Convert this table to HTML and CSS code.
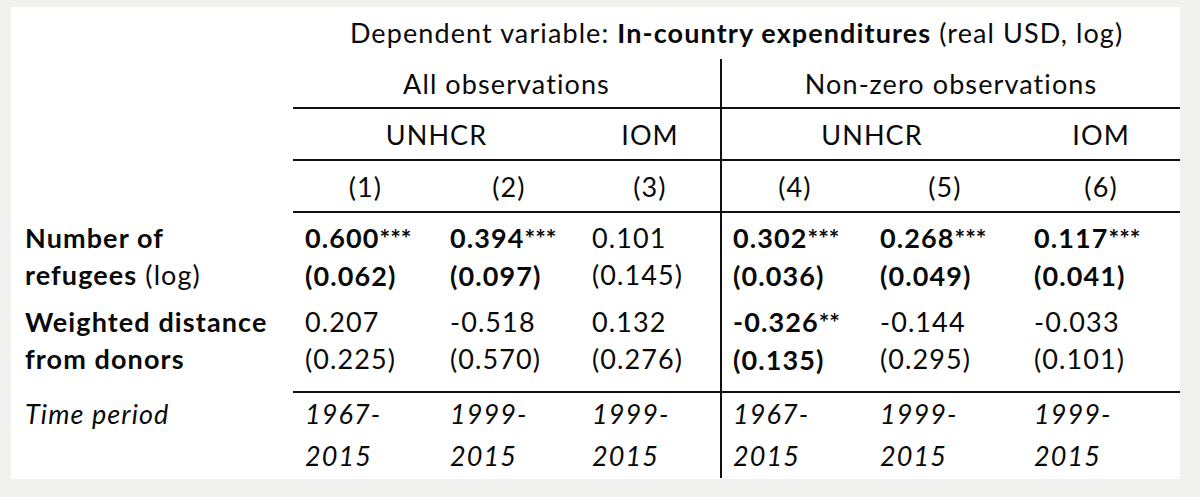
FILE: index.html
```html
<!DOCTYPE html>
<html lang="en">
<head>
<meta charset="utf-8">
<title>In-country expenditures regression table</title>
<link rel="stylesheet" href="styles.css">
</head>
<body>
<div class="sheet">
  <table class="results">
    <colgroup>
      <col class="w-label">
      <col class="w-c1">
      <col class="w-c2">
      <col class="w-c3">
      <col class="w-c4">
      <col class="w-c5">
      <col class="w-c6">
    </colgroup>
    <tr class="h1">
      <td class="label"></td>
      <td colspan="6" class="c">Dependent variable: <b>In-country expenditures</b> (real USD, log)</td>
    </tr>
    <tr class="h2">
      <td class="label"></td>
      <td colspan="3" class="c bb">All observations</td>
      <td colspan="3" class="c bb bl">Non-zero observations</td>
    </tr>
    <tr class="h3">
      <td class="label"></td>
      <td colspan="2" class="c bb">UNHCR</td>
      <td class="c bb">IOM</td>
      <td colspan="2" class="c bb bl">UNHCR</td>
      <td class="c bb">IOM</td>
    </tr>
    <tr class="h3">
      <td class="label"></td>
      <td class="c bb">(1)</td>
      <td class="c bb">(2)</td>
      <td class="c bb">(3)</td>
      <td class="c bb bl">(4)</td>
      <td class="c bb">(5)</td>
      <td class="c bb">(6)</td>
    </tr>
    <tr class="r1">
      <td class="label"><b>Number of<br>refugees</b> (log)</td>
      <td class="d"><b>0.600</b><span class="st">***</span><br><b>(0.062)</b></td>
      <td class="d"><b>0.394</b><span class="st">***</span><br><b>(0.097)</b></td>
      <td class="d">0.101<br>(0.145)</td>
      <td class="d bl"><b>0.302</b><span class="st">***</span><br><b>(0.036)</b></td>
      <td class="d"><b>0.268</b><span class="st">***</span><br><b>(0.049)</b></td>
      <td class="d"><b>0.117</b><span class="st">***</span><br><b>(0.041)</b></td>
    </tr>
    <tr class="r2">
      <td class="label"><b>Weighted distance<br>from donors</b></td>
      <td class="d bb">0.207<br>(0.225)</td>
      <td class="d bb">-0.518<br>(0.570)</td>
      <td class="d bb">0.132<br>(0.276)</td>
      <td class="d bb bl"><b>-0.326</b><span class="st">**</span><br><b>(0.135)</b></td>
      <td class="d bb">-0.144<br>(0.295)</td>
      <td class="d bb">-0.033<br>(0.101)</td>
    </tr>
    <tr class="r3">
      <td class="label"><i>Time period</i></td>
      <td class="d"><i>1967-<br>2015</i></td>
      <td class="d"><i>1999-<br>2015</i></td>
      <td class="d"><i>1999-<br>2015</i></td>
      <td class="d bl"><i>1967-<br>2015</i></td>
      <td class="d"><i>1999-<br>2015</i></td>
      <td class="d"><i>1999-<br>2015</i></td>
    </tr>
  </table>
</div>
</body>
</html>
```
FILE: styles.css
```css
html, body {
  margin: 0;
  padding: 0;
}

body {
  background: #f1f1f0;
  padding: 7px 0 0 11px;
  font-family: Lato, "Open Sans", "DejaVu Sans", sans-serif;
  color: #0a0a0a;
}

.sheet {
  width: 1169px;
  height: 472px;
  background: #fff;
}

.results {
  border-collapse: separate;
  border-spacing: 0;
  table-layout: fixed;
  width: 1169px;
  font-size: 27px;
  line-height: 37px;
  letter-spacing: 1.1px;
}

.w-label { width: 282px; }
.w-c1 { width: 145px; }
.w-c2 { width: 142px; }
.w-c3 { width: 140px; }
.w-c4 { width: 148px; }
.w-c5 { width: 154px; }
.w-c6 { width: 158px; }

.results td {
  vertical-align: top;
  padding: 0;
  white-space: nowrap;
}

.results b { font-weight: 700; }

.c { text-align: center; }

.bb { border-bottom: 2px solid #111; }
.bl { border-left: 2px solid #111; }

.label { padding-left: 14px !important; text-align: left; }

.d { padding-left: 12px !important; text-align: left; }
.d.bl { padding-left: 11px !important; }

.h1 td { padding-top: 7px; padding-bottom: 8px; }
.h2 td { padding-top: 6px; padding-bottom: 5px; }
.h3 td { padding-top: 7px; padding-bottom: 6px; }

.r1 td { padding-top: 6px; padding-bottom: 5px; }
.r2 td { padding-top: 4px; padding-bottom: 13px; }
.r3 td { padding-top: 0; padding-bottom: 1px; line-height: 42px; }

.st {
  font-size: 25px;
  font-weight: 700;
  letter-spacing: 0;
}
```
